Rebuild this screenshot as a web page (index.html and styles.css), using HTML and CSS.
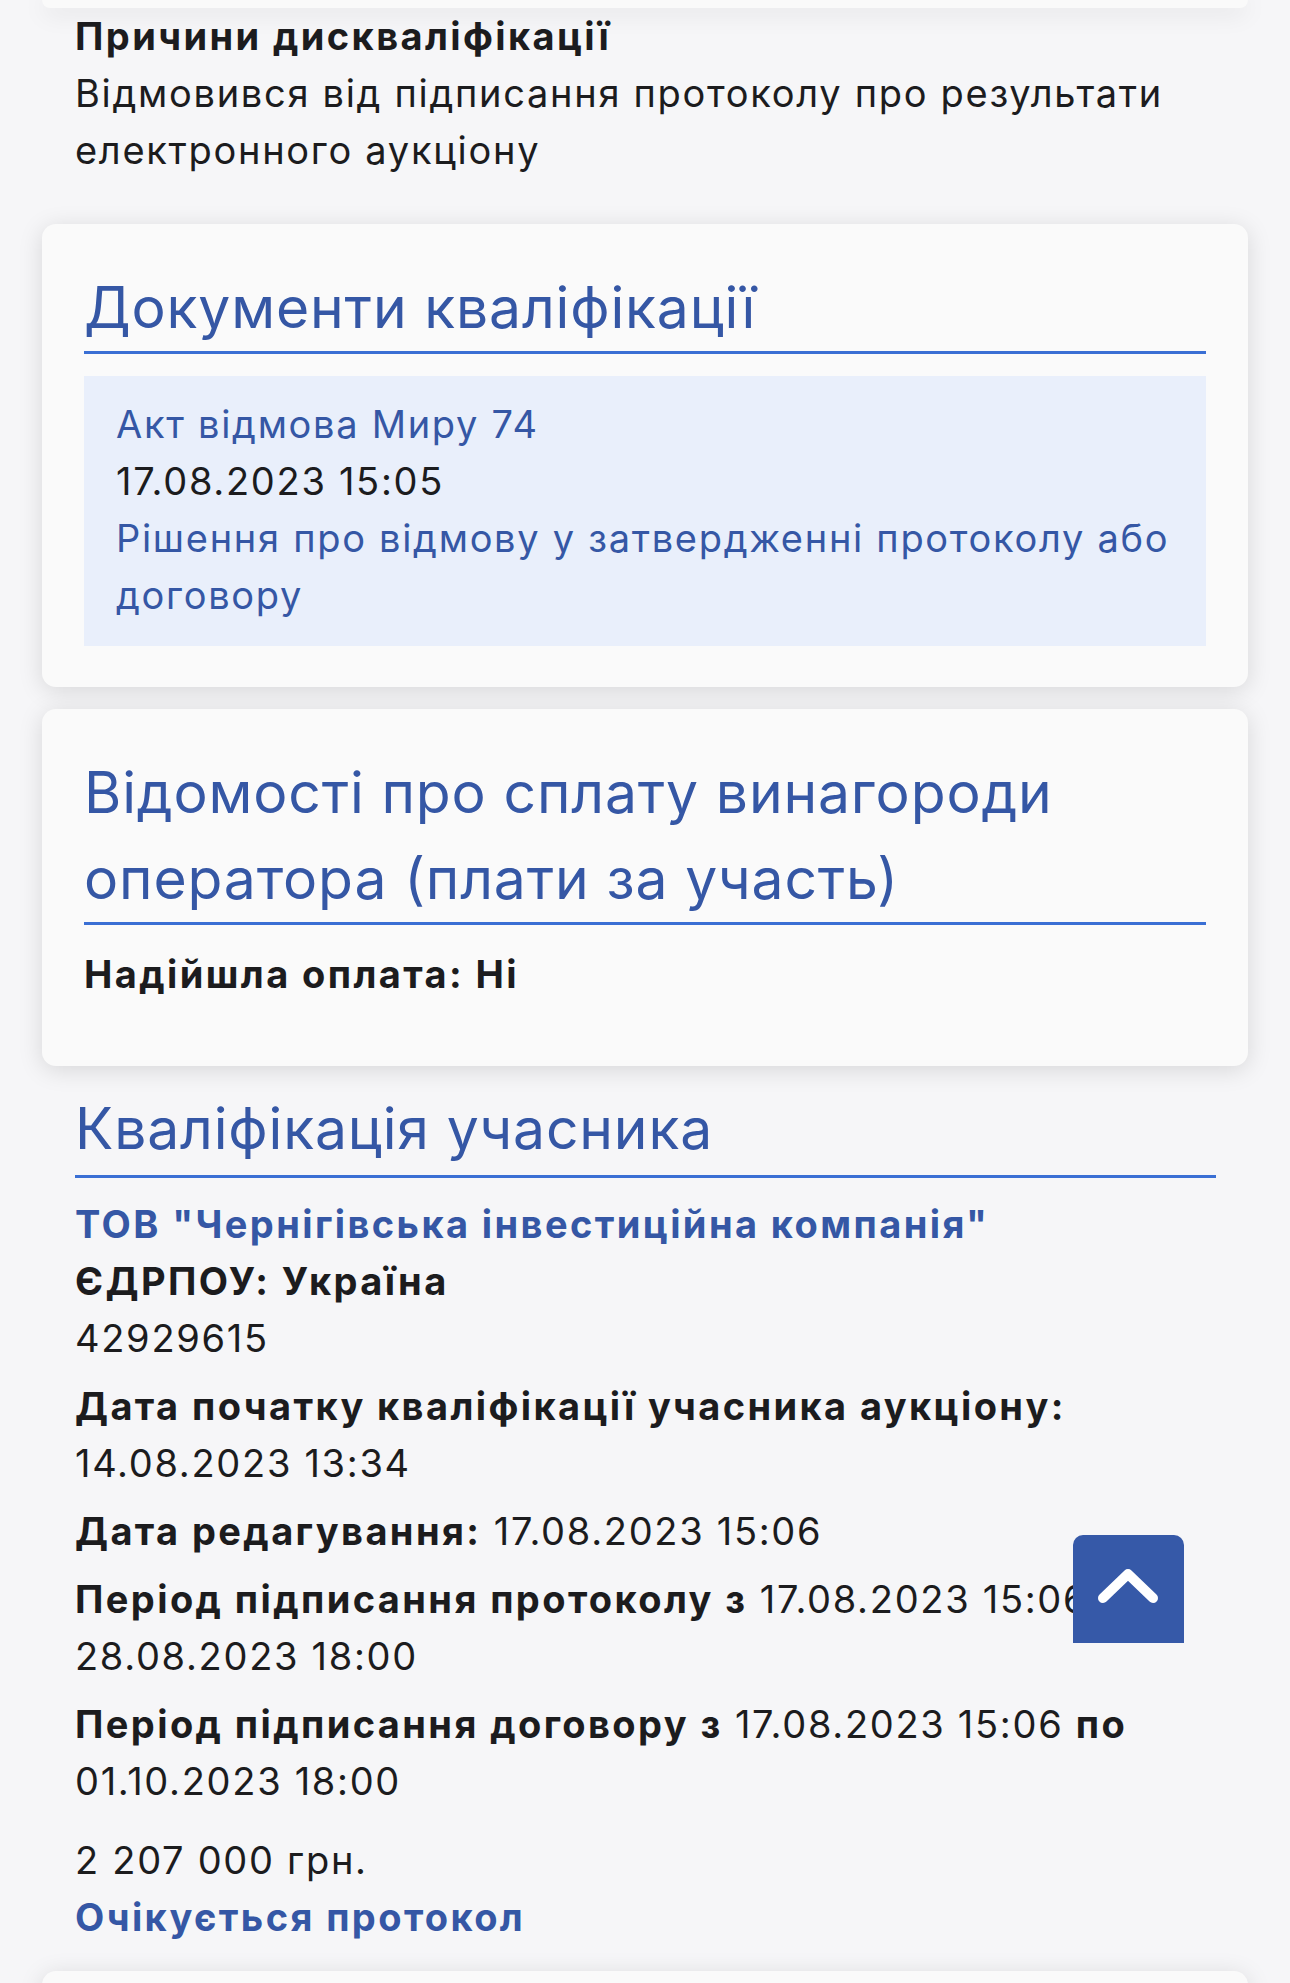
FILE: index.html
```html
<!DOCTYPE html>
<html lang="uk">
<head>
  <meta charset="UTF-8">
  <meta name="viewport" content="width=device-width, initial-scale=1.0">
  <title>Кваліфікація учасника</title>
  <link rel="stylesheet" href="styles.css">
</head>
<body>

  <div class="page">
    <div class="card card-cut"></div>

    <div class="reasons">
      <div class="label">Причини дискваліфікації</div>
      <div>Відмовився від підписання протоколу про результати електронного аукціону</div>
    </div>

    <div class="card">
      <h2 class="title">Документи кваліфікації</h2>
      <div class="doc">
        <a href="#" class="link">Акт відмова Миру 74</a>
        <div>17.08.2023 15:05</div>
        <div class="link">Рішення про відмову у затвердженні протоколу або договору</div>
      </div>
    </div>

    <div class="card card-pay">
      <h2 class="title">Відомості про сплату винагороди оператора (плати за участь)</h2>
      <div class="label">Надійшла оплата: Ні</div>
    </div>

    <div class="section">
      <h2 class="title">Кваліфікація учасника</h2>
      <div class="fields">
        <div class="company">ТОВ "Чернігівська інвестиційна компанія"</div>
        <div class="label">ЄДРПОУ: Україна</div>
        <div>42929615</div>

        <div class="field"><b>Дата початку кваліфікації учасника аукціону:</b> 14.08.2023 13:34</div>
        <div class="field"><b>Дата редагування:</b> 17.08.2023 15:06</div>
        <div class="field"><b>Період підписання протоколу з</b> 17.08.2023 15:06 <b>по</b> 28.08.2023 18:00</div>
        <div class="field"><b>Період підписання договору з</b> 17.08.2023 15:06 <b>по</b> 01.10.2023 18:00</div>

        <div class="price">2 207 000 грн.</div>
        <div class="status">Очікується протокол</div>
      </div>
    </div>

    <div class="card card-next"></div>
  </div>

  <a href="#" class="to-top">
    <svg width="111" height="108" viewBox="0 0 111 108">
      <polyline points="30,63 55,39 80,63" fill="none" stroke="#fff" stroke-width="10" stroke-linecap="round" stroke-linejoin="round"/>
    </svg>
  </a>

</body>
</html>
```

FILE: styles.css
```css
body {
  margin: 0;
  padding: 0;
  background-color: #f6f6f8;
  color: #1c1c1e;
  font-family: Inter, "Noto Sans", sans-serif;
  font-size: 38px;
  line-height: 57px;
  letter-spacing: 1.7px;
  height: 1983px;
  overflow: hidden;
}

.page {
  padding: 0 42px;
}

.card {
  background-color: #fafafa;
  border-radius: 14px;
  box-shadow: 0 4px 24px rgba(0, 0, 0, 0.13);
  padding: 41px 42px 41px 42px;
}

.card-cut {
  height: 8px;
  padding: 0;
  border-radius: 0 0 14px 14px;
}

.card-pay {
  margin-top: 22px;
  padding-bottom: 63px;
}

.card-next {
  margin-top: 25px;
  height: 40px;
  padding: 0;
}

.reasons {
  padding: 0 33px;
  margin-bottom: 45px;
}

.label,
.company,
.status,
b {
  font-weight: 700;
  letter-spacing: 2.4px;
}

.title {
  margin: 0;
  color: #3557a5;
  font-size: 57px;
  line-height: 86px;
  font-weight: 400;
  letter-spacing: 0.85px;
  border-bottom: 3px solid #3a6fd4;
  padding-bottom: 0;
}

.doc {
  margin-top: 22px;
  background-color: #e9effb;
  padding: 20px 32px 22px 32px;
}

.link {
  display: block;
  color: #3557a5;
  text-decoration: none;
}

.card-pay .label {
  margin-top: 21px;
}

.section {
  padding: 20px 32px 0 33px;
}

.section .title {
  padding-bottom: 3px;
}

.fields {
  margin-top: 18px;
}

.company,
.status {
  color: #3557a5;
}

.field {
  margin-top: 11px;
}

.price {
  margin-top: 22px;
}

.to-top {
  position: fixed;
  left: 1073px;
  top: 1535px;
  width: 111px;
  height: 108px;
  background-color: #3659a8;
  border-radius: 10px 10px 0 0;
}

.to-top svg {
  display: block;
}
```
